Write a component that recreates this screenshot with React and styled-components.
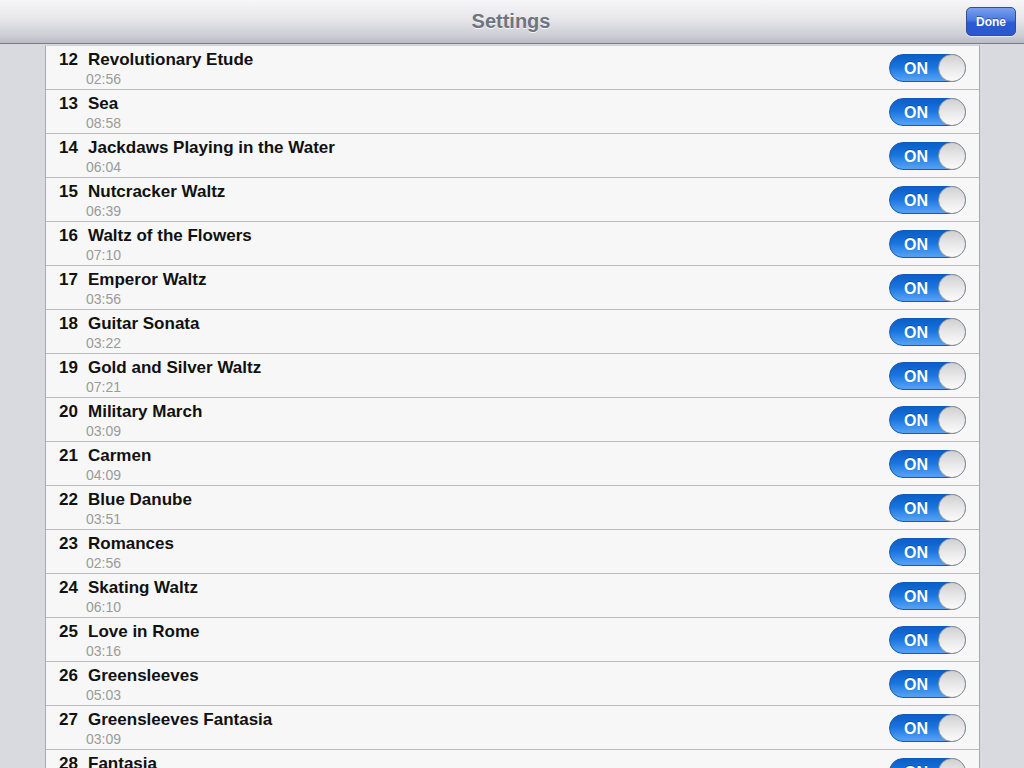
import React from "react";
import styled, { createGlobalStyle } from "styled-components";

const Global = createGlobalStyle`
  html, body { margin: 0; padding: 0; overflow: hidden; }
  body {
    width: 1024px; height: 768px;
    background: #d8dae0;
    font-family: "Liberation Sans", Arial, sans-serif;
  }
`;

const Page = styled.div`
  width: 1024px;
  height: 768px;
  overflow: hidden;
  display: flex;
  flex-direction: column;
  background: #d8dae0;
`;

const NavBar = styled.div`
  height: 43px;
  flex: none;
  display: flex;
  align-items: center;
  justify-content: center;
  position: relative;
  background: linear-gradient(#f6f6f8 0%, #e9e9ed 40%, #cfd0d7 80%, #b9bbc5 100%);
  border-bottom: 1px solid #7b7d86;
`;

const Title = styled.div`
  font-size: 20px;
  font-weight: bold;
  color: #6f7480;
  text-shadow: 0 1px 0 rgba(255, 255, 255, 0.8);
  margin-left: -2px;
`;

const DoneButton = styled.button`
  position: absolute;
  right: 8px;
  top: 7px;
  width: 50px;
  height: 29px;
  border-radius: 5px;
  border: 1px solid #2f4e9a;
  background: linear-gradient(#7aa0ee 0%, #4a78e2 45%, #2b5ad3 55%, #2a58cf 100%);
  color: #fff;
  font-family: "Liberation Sans", Arial, sans-serif;
  font-size: 12px;
  font-weight: bold;
  text-shadow: 0 -1px 0 rgba(0, 0, 0, 0.35);
  padding: 0;
  box-shadow: 0 1px 0 rgba(255, 255, 255, 0.6);
`;

const List = styled.div`
  margin-left: 45px;
  margin-top: 1px;
  width: 933px;
  border-top: 1px solid #d0d0d4;
  border-left: 1px solid #a8aab0;
  border-right: 1px solid #a8aab0;
  background: #f7f7f7;
  display: flex;
  flex-direction: column;
`;

const Row = styled.div`
  height: 43px;
  border-bottom: 1px solid #bcbcbc;
  display: flex;
  align-items: center;
  padding: 0 13px 0 13px;
  flex: none;
`;

const Info = styled.div`
  flex: 1;
  display: grid;
  grid-template-columns: 29px 1fr;
  grid-template-rows: auto auto;
  margin-top: 2px;
`;

const Num = styled.span`
  font-size: 17px;
  font-weight: bold;
  color: #111;
  line-height: 20px;
`;

const Name = styled.span`
  font-size: 17px;
  font-weight: bold;
  color: #111;
  line-height: 20px;
`;

const Time = styled.span`
  grid-column: 2;
  font-size: 14px;
  color: #9a9a9a;
  line-height: 18px;
  margin-left: -2px;
`;

const Switch = styled.div`
  width: 77px;
  height: 28px;
  border-radius: 14px;
  box-sizing: border-box;
  border: 1px solid #1558b8;
  background: linear-gradient(#0a5fc8 0%, #1a72dc 45%, #3a8fec 75%, #56a2f2 100%);
  display: flex;
  align-items: center;
  position: relative;
  flex: none;
  margin-top: 1px;
`;

const SwitchLabel = styled.span`
  width: 52px;
  text-align: center;
  color: #fff;
  font-size: 16px;
  font-weight: bold;
  text-shadow: 0 -1px 0 rgba(0, 0, 0, 0.3);
  margin-top: 1px;
`;

const Knob = styled.span`
  position: absolute;
  right: -1px;
  top: -1px;
  width: 28px;
  height: 28px;
  box-sizing: border-box;
  border-radius: 50%;
  border: 1px solid #9a9a9a;
  background: linear-gradient(#d0d0d0 0%, #e8e8e8 50%, #fbfbfb 100%);
`;

const songs = [
  [12, "Revolutionary Etude", "02:56"],
  [13, "Sea", "08:58"],
  [14, "Jackdaws Playing in the Water", "06:04"],
  [15, "Nutcracker Waltz", "06:39"],
  [16, "Waltz of the Flowers", "07:10"],
  [17, "Emperor Waltz", "03:56"],
  [18, "Guitar Sonata", "03:22"],
  [19, "Gold and Silver Waltz", "07:21"],
  [20, "Military March", "03:09"],
  [21, "Carmen", "04:09"],
  [22, "Blue Danube", "03:51"],
  [23, "Romances", "02:56"],
  [24, "Skating Waltz", "06:10"],
  [25, "Love in Rome", "03:16"],
  [26, "Greensleeves", "05:03"],
  [27, "Greensleeves Fantasia", "03:09"],
  [28, "Fantasia", "04:12"],
];

export default function App() {
  return (
    <Page>
      <Global />
      <NavBar>
        <Title>Settings</Title>
        <DoneButton>Done</DoneButton>
      </NavBar>
      <List>
        {songs.map(([n, name, time]) => (
          <Row key={n}>
            <Info>
              <Num>{n}</Num>
              <Name>{name}</Name>
              <Time>{time}</Time>
            </Info>
            <Switch>
              <SwitchLabel>ON</SwitchLabel>
              <Knob />
            </Switch>
          </Row>
        ))}
      </List>
    </Page>
  );
}
